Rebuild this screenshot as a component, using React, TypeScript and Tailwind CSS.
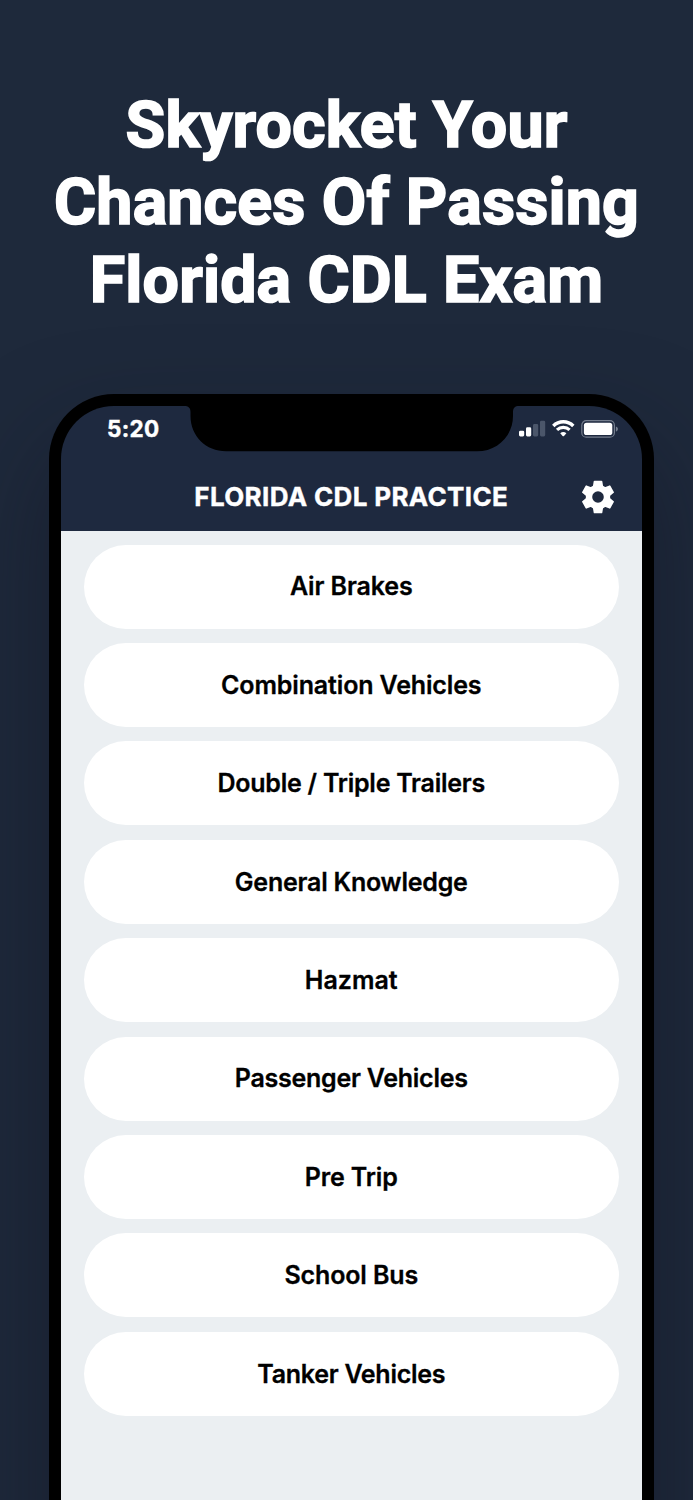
const categories = [
  { label: "Air Brakes", tracking: "tracking-[-0.12px]" },
  { label: "Combination Vehicles", tracking: "tracking-[-0.14px]" },
  { label: "Double / Triple Trailers", tracking: "tracking-[-0.24px]" },
  { label: "General Knowledge", tracking: "tracking-[-0.22px]" },
  { label: "Hazmat", tracking: "tracking-normal" },
  { label: "Passenger Vehicles", tracking: "tracking-[-0.25px]" },
  { label: "Pre Trip", tracking: "tracking-[-0.12px]" },
  { label: "School Bus", tracking: "tracking-[-0.12px]" },
  { label: "Tanker Vehicles", tracking: "tracking-[-0.28px]" },
];

function Notch() {
  return (
    <svg className="absolute top-0 left-[123px] h-[46px] w-[335px]" viewBox="0 0 335 46" fill="#000">
      <path d="M0 0H335V.1C331 .1 329 2 329 6V10C329 30 313 45.3 293 45.3H42C22 45.3 6.500 30 6.500 10V6C6.500 2 4.500.1 0 .1Z" />
    </svg>
  );
}

function StatusIcons() {
  return (
    <svg className="h-[20px] w-[102px]" viewBox="0 0 102 20" fill="none">
      <rect x="1" y="11.700" width="5.200" height="5.800" rx="1.400" fill="#fff" />
      <rect x="8" y="8.300" width="5.200" height="9.200" rx="1.400" fill="#fff" />
      <rect x="15" y="5.100" width="5.200" height="12.400" rx="1.400" fill="#4b566a" />
      <rect x="22" y="1.700" width="5.200" height="15.800" rx="1.400" fill="#4b566a" />
      <path d="M35.300 6.900C40.900 1.400 49.700 1.400 55.300 6.900" stroke="#fff" strokeWidth="3.500" />
      <path d="M39 10.900C42.500 7.500 48.100 7.500 51.600 10.900" stroke="#fff" strokeWidth="3.200" />
      <path d="M42.200 14.200C44 12.700 46.600 12.700 48.400 14.200L46 16.900Q45.300 17.600 44.600 16.900Z" fill="#fff" />
      <rect x="63.800" y="1.700" width="32.600" height="16.500" rx="4.500" stroke="#747d8d" strokeWidth="1.200" />
      <rect x="65.900" y="3.800" width="28.400" height="12.300" rx="2.600" fill="#fff" />
      <path d="M97.900 7.500C100.600 8.400 100.600 11.700 97.900 12.600Z" fill="#747d8d" />
    </svg>
  );
}

function Gear() {
  return (
    <svg className="size-[34px]" viewBox="-17 -17 34 34">
      <g fill="#fff">
        <circle r="9" fill="none" stroke="#fff" strokeWidth="6.400" />
        {[0, 60, 120, 180, 240, 300].map((angle) => (
          <path
            key={angle}
            transform={`rotate(${angle})`}
            d="M-3.500-16.300H3.500Q4.200-16.300 4.300-15.700L5-11.500L5.800-9H-5.800L-5-11.500L-4.300-15.700Q-4.200-16.300-3.500-16.300Z"
          />
        ))}
      </g>
    </svg>
  );
}

export default function App() {
  return (
    <div className="flex h-[1500px] w-[693px] flex-col overflow-hidden bg-[#1e293b] font-['Inter',sans-serif]">
      <h1 className="h-[393.500px] shrink-0 pt-[86.500px] text-center font-['Roboto',sans-serif] text-[64.500px] leading-[77.700px] font-bold tracking-[0.150px] text-white [-webkit-text-stroke:1.700px_white]">
        Skyrocket Your
        <br />
        Chances Of Passing
        <br />
        Florida CDL Exam
      </h1>
      <div className="ml-[48.500px] h-[1200px] w-[605.500px] shrink-0 rounded-t-[65px] bg-black px-[12.500px] pt-[12.500px] shadow-[0_50px_100px_rgba(18,20,34,0.5)]">
        <div className="relative h-full overflow-hidden rounded-t-[53px]">
          <header className="h-[124.500px] bg-[#1e293f] text-white">
            <div className="flex h-[46px] items-center justify-between pr-[22px] pl-[46px]">
              <span className="text-[22.500px] font-bold tracking-[0.3px] [-webkit-text-stroke:0.400px_white]">5:20</span>
              <StatusIcons />
            </div>
            <div className="grid h-[89px] grid-cols-[88px_1fr_88px] items-center">
              <h2 className="col-start-2 text-center text-[26px] font-bold tracking-[0.35px] whitespace-nowrap [-webkit-text-stroke:0.400px_white]">
                FLORIDA CDL PRACTICE
              </h2>
              <button className="justify-self-center" aria-label="Settings">
                <Gear />
              </button>
            </div>
          </header>
          <Notch />
          <main className="flex h-[1080px] flex-col gap-[14.400px] bg-[#ebeff2] px-[22.500px] pt-[14.200px]">
            {categories.map(({ label, tracking }) => (
              <button
                key={label}
                className={`h-[84px] shrink-0 rounded-full bg-white pt-[1px] text-[25px] font-semibold text-black [-webkit-text-stroke:0.300px_black] ${tracking}`}
              >
                {label}
              </button>
            ))}
          </main>
        </div>
      </div>
    </div>
  );
}
